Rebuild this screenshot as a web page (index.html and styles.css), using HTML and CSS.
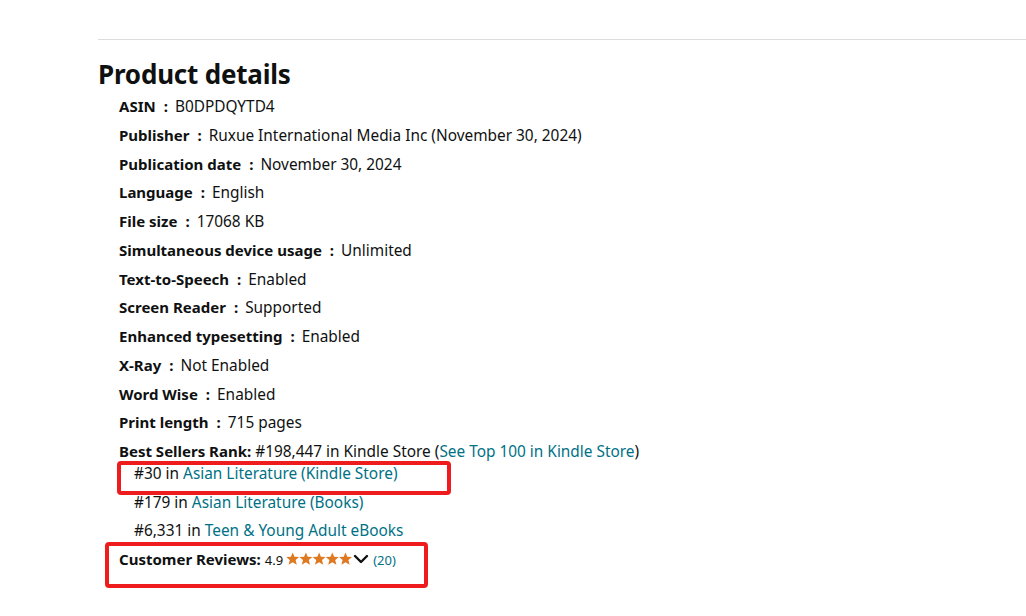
FILE: index.html
```html
<!DOCTYPE html>
<html lang="en">
<head>
<meta charset="utf-8">
<title>Product details</title>
<link rel="stylesheet" href="styles.css">
</head>
<body>
<div class="page">
  <hr class="divider">
  <h2 class="title">Product details</h2>
  <ul class="details">
    <li><span class="label">ASIN</span><span class="sep">:</span><span>B0DPDQYTD4</span></li>
    <li><span class="label">Publisher</span><span class="sep">:</span><span>Ruxue International Media Inc (November 30, 2024)</span></li>
    <li><span class="label">Publication date</span><span class="sep">:</span><span>November 30, 2024</span></li>
    <li><span class="label">Language</span><span class="sep">:</span><span>English</span></li>
    <li><span class="label">File size</span><span class="sep">:</span><span>17068 KB</span></li>
    <li><span class="label">Simultaneous device usage</span><span class="sep">:</span><span>Unlimited</span></li>
    <li><span class="label">Text-to-Speech</span><span class="sep">:</span><span>Enabled</span></li>
    <li><span class="label">Screen Reader</span><span class="sep">:</span><span>Supported</span></li>
    <li><span class="label">Enhanced typesetting</span><span class="sep">:</span><span>Enabled</span></li>
    <li><span class="label">X-Ray</span><span class="sep">:</span><span>Not Enabled</span></li>
    <li><span class="label">Word Wise</span><span class="sep">:</span><span>Enabled</span></li>
    <li><span class="label">Print length</span><span class="sep">:</span><span>715 pages</span></li>
    <li class="rank">
      <span class="label">Best Sellers Rank:</span> #198,447 in Kindle Store (<a href="#" class="link">See Top 100 in Kindle Store</a>)
      <ul class="sublist">
        <li class="boxed">#30 in <a href="#" class="link">Asian Literature (Kindle Store)</a></li>
        <li>#179 in <a href="#" class="link">Asian Literature (Books)</a></li>
        <li>#6,331 in <a href="#" class="link">Teen &amp; Young Adult eBooks</a></li>
      </ul>
    </li>
    <li class="reviews">
      <span class="label">Customer Reviews:</span>
      <span class="score">4.9</span><span class="stars">
        <svg width="67" height="14" viewBox="0 0 67 14" aria-hidden="true">
          <g fill="#de7921">
            <path d="M6.7 0.4 L8.5 4.8 L13.2 5.1 L9.6 8.1 L10.8 12.8 L6.7 10.2 L2.6 12.8 L3.8 8.1 L0.2 5.1 L4.9 4.8 Z"/>
            <path transform="translate(13.2 0)" d="M6.7 0.4 L8.5 4.8 L13.2 5.1 L9.6 8.1 L10.8 12.8 L6.7 10.2 L2.6 12.8 L3.8 8.1 L0.2 5.1 L4.9 4.8 Z"/>
            <path transform="translate(26.4 0)" d="M6.7 0.4 L8.5 4.8 L13.2 5.1 L9.6 8.1 L10.8 12.8 L6.7 10.2 L2.6 12.8 L3.8 8.1 L0.2 5.1 L4.9 4.8 Z"/>
            <path transform="translate(39.6 0)" d="M6.7 0.4 L8.5 4.8 L13.2 5.1 L9.6 8.1 L10.8 12.8 L6.7 10.2 L2.6 12.8 L3.8 8.1 L0.2 5.1 L4.9 4.8 Z"/>
            <path transform="translate(52.8 0)" d="M6.7 0.4 L8.5 4.8 L13.2 5.1 L9.6 8.1 L10.8 12.8 L6.7 10.2 L2.6 12.8 L3.8 8.1 L0.2 5.1 L4.9 4.8 Z"/>
          </g>
        </svg>
        <svg class="chev" width="16" height="10" viewBox="0 0 16 10" aria-hidden="true">
          <path d="M2 2 L8 8 L14 2" fill="none" stroke="#0f1111" stroke-width="2.4" stroke-linecap="round" stroke-linejoin="round"/>
        </svg>
      </span><a href="#" class="link count">(20)</a>
    </li>
  </ul>
</div>
</body>
</html>
```
FILE: styles.css
```css
html, body {
  margin: 0;
  padding: 0;
  background: #ffffff;
}

body {
  font-family: "Noto Sans", "Open Sans", "Liberation Sans", sans-serif;
  color: #0f1111;
  font-size: 15.4px;
}

.page {
  padding: 39px 0 30px 98px;
}

.divider {
  margin: 0;
  border: 0;
  border-top: 1px solid #dddddd;
  height: 0;
}

.title {
  margin: 17px 0 2px 0;
  font-size: 26px;
  line-height: 34px;
  font-weight: 700;
  letter-spacing: -0.2px;
}

.details {
  list-style: none;
  margin: 0;
  padding: 0 0 0 21px;
}

.details li {
  line-height: 28.75px;
  white-space: nowrap;
}

.label {
  font-weight: 700;
  font-size: 15px;
  line-height: 1;
}

.sep {
  font-weight: 700;
  font-size: 15px;
  line-height: 1;
  margin: 0 7px 0 8px;
}

.link {
  color: #007185;
  text-decoration: none;
}

.sublist {
  list-style: none;
  margin: -6.5px 0 0 15px;
  padding: 0;
}

.sublist li {
  line-height: 28.5px;
}

.boxed {
  position: relative;
}

.boxed::after {
  content: "";
  position: absolute;
  left: -17px;
  top: 1px;
  width: 326px;
  height: 26px;
  border: 4px solid #ee1c1c;
  border-radius: 4px;
}

.reviews {
  position: relative;
}

.reviews::after {
  content: "";
  position: absolute;
  left: -14px;
  top: -4px;
  width: 315px;
  height: 38px;
  border: 4px solid #ee1c1c;
  border-radius: 4px;
}

.score {
  font-size: 13px;
  line-height: 1;
  margin-right: 3px;
}

.stars {
  display: inline-flex;
  align-items: center;
  vertical-align: -1px;
  line-height: 1;
}

.count {
  font-size: 13px;
  line-height: 1;
  margin-left: 4px;
}
```
